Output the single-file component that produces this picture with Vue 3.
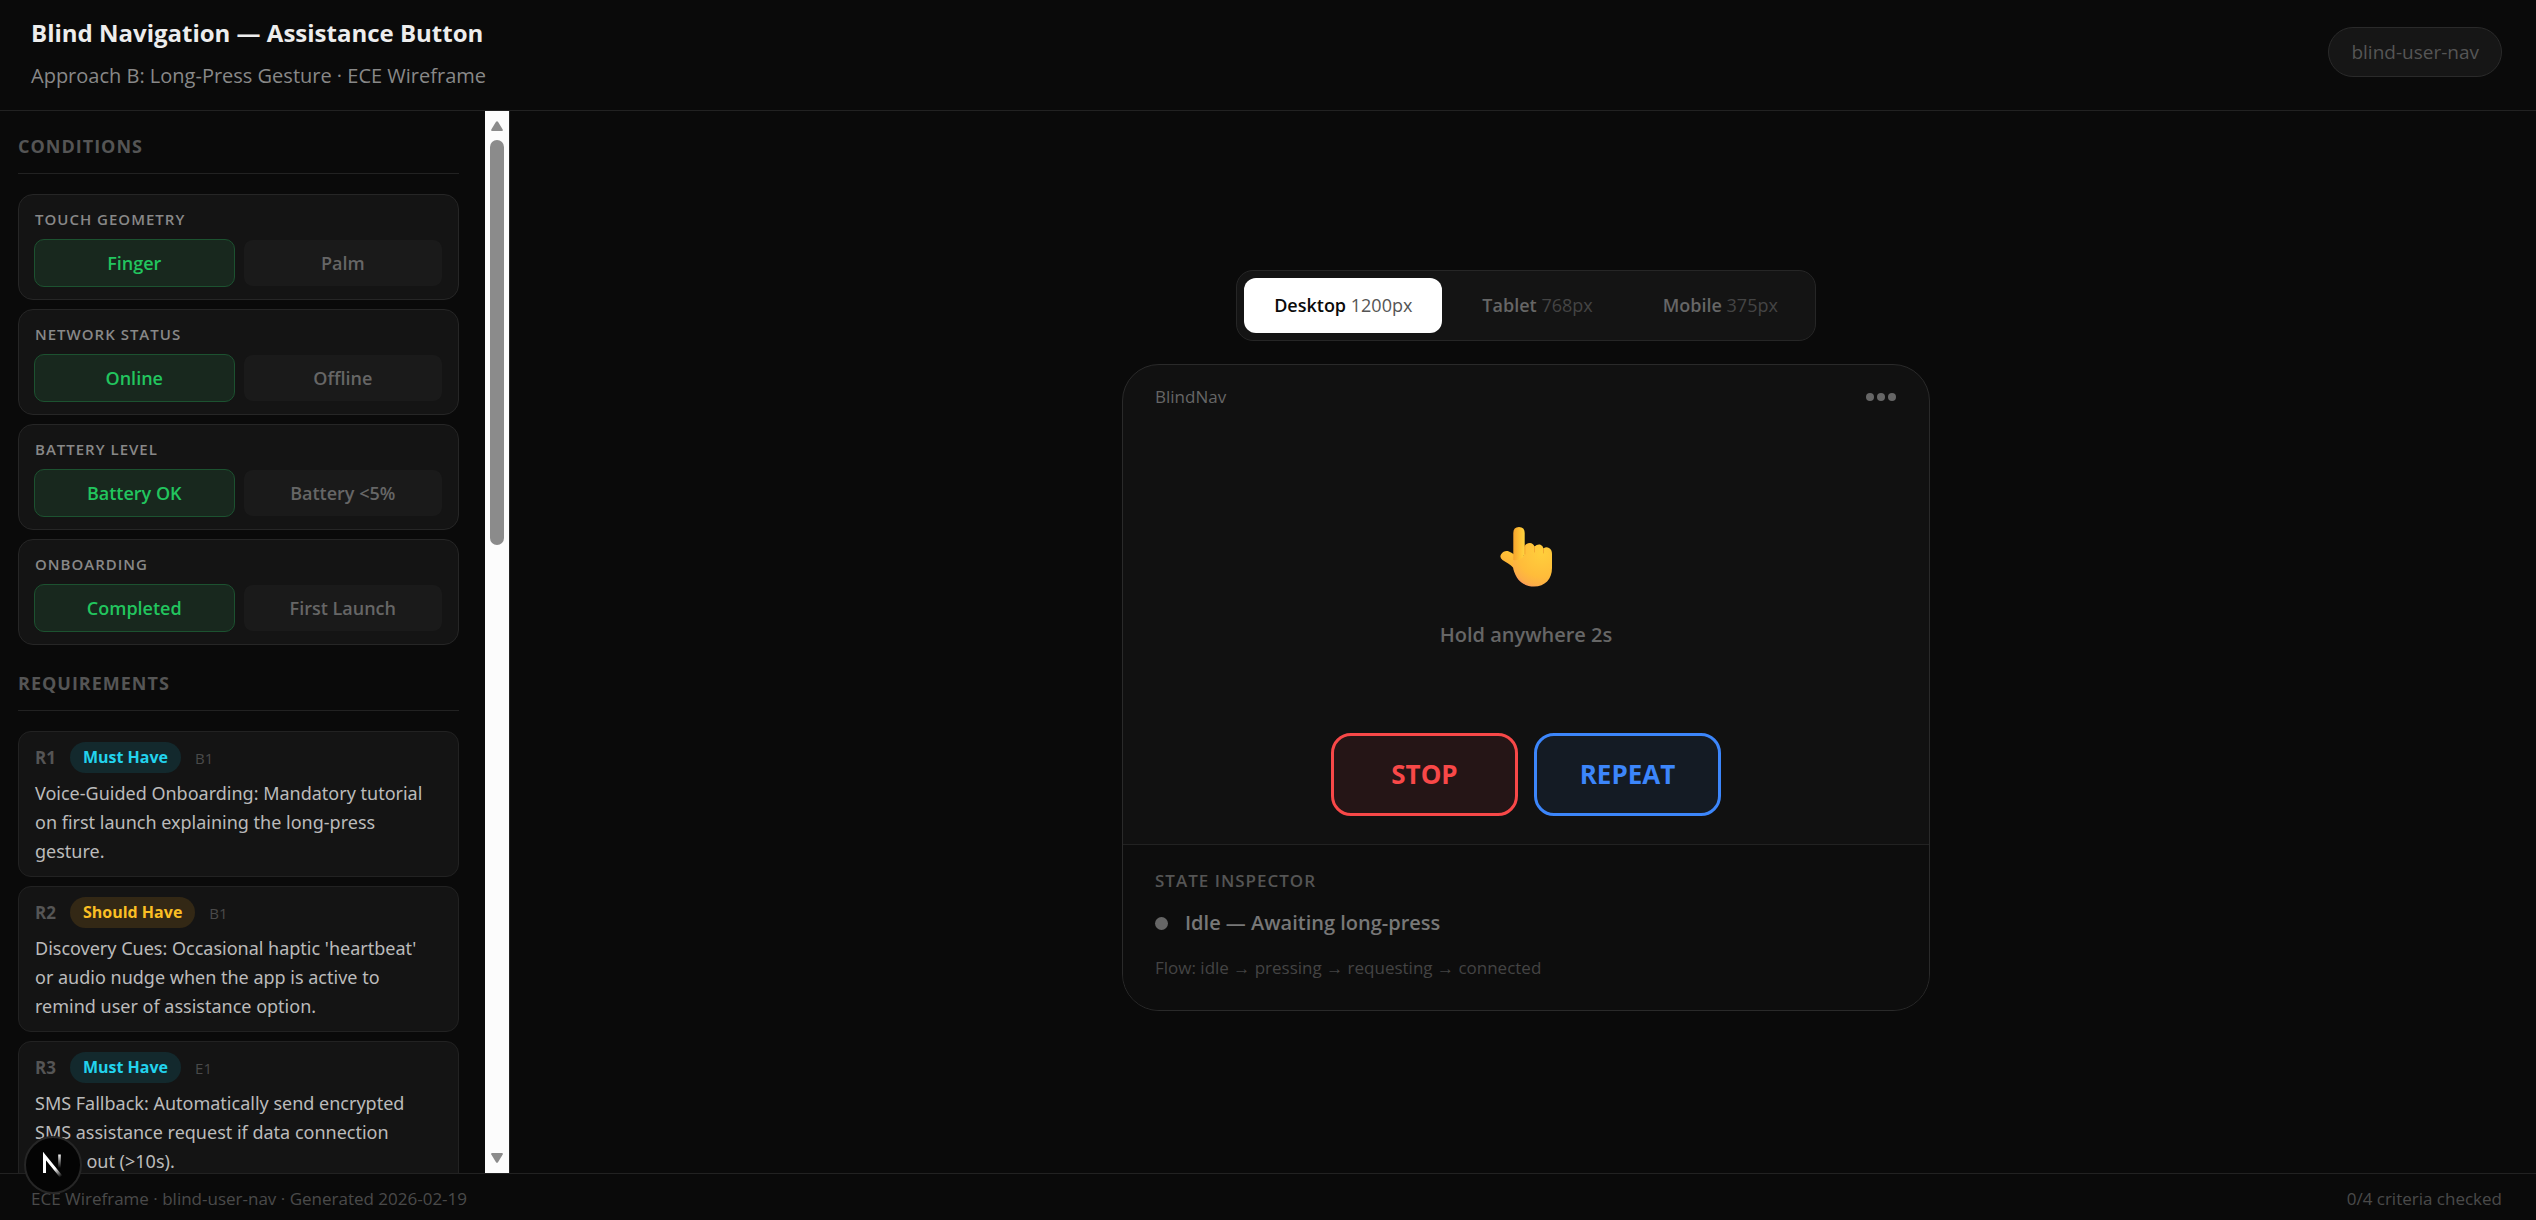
<script setup>
import { ref } from 'vue'

const conditions = ref([
  { label: 'Touch Geometry', options: ['Finger', 'Palm'], active: 0 },
  { label: 'Network Status', options: ['Online', 'Offline'], active: 0 },
  { label: 'Battery Level', options: ['Battery OK', 'Battery <5%'], active: 0 },
  { label: 'Onboarding', options: ['Completed', 'First Launch'], active: 0 },
])

const requirements = [
  {
    id: 'R1',
    priority: 'Must Have',
    kind: 'must',
    code: 'B1',
    text: 'Voice-Guided Onboarding: Mandatory tutorial on first launch explaining the long-press gesture.',
  },
  {
    id: 'R2',
    priority: 'Should Have',
    kind: 'should',
    code: 'B1',
    text: "Discovery Cues: Occasional haptic 'heartbeat' or audio nudge when the app is active to remind user of assistance option.",
  },
  {
    id: 'R3',
    priority: 'Must Have',
    kind: 'must',
    code: 'E1',
    text: 'SMS Fallback: Automatically send encrypted SMS assistance request if data connection times out (>10s).',
  },
]

const devices = [
  { name: 'Desktop', size: '1200px' },
  { name: 'Tablet', size: '768px' },
  { name: 'Mobile', size: '375px' },
]
const device = ref(0)
</script>

<template>
  <div class="app">
    <header class="top">
      <div>
        <h1>Blind Navigation — Assistance Button</h1>
        <p class="subtitle">Approach B: Long-Press Gesture · ECE Wireframe</p>
      </div>
      <span class="project">blind-user-nav</span>
    </header>

    <div class="body">
      <aside class="sidebar">
        <div class="panel">
          <h2>Conditions</h2>
          <section class="stack">
            <div v-for="c in conditions" :key="c.label" class="condition">
              <h3>{{ c.label }}</h3>
              <div class="options">
                <button
                  v-for="(o, i) in c.options"
                  :key="o"
                  type="button"
                  :class="{ on: c.active === i }"
                  @click="c.active = i"
                >{{ o }}</button>
              </div>
            </div>
          </section>

          <h2>Requirements</h2>
          <section class="stack">
            <article v-for="r in requirements" :key="r.id" class="requirement">
              <div class="meta">
                <span class="rid">{{ r.id }}</span>
                <span class="badge" :class="r.kind">{{ r.priority }}</span>
                <span class="code">{{ r.code }}</span>
              </div>
              <p>{{ r.text }}</p>
            </article>
          </section>
        </div>
        <div class="scrollbar" aria-hidden="true">
          <svg width="12" height="10" viewBox="0 0 12 10"><path d="M5 .8Q6-.4 7 .8L11.7 8.4Q12.2 10 11 10H1Q-.2 10 .3 8.4Z" fill="#8b8b8b" /></svg>
          <div class="track"><div class="thumb"></div></div>
          <svg width="12" height="10" viewBox="0 0 12 10"><path d="M5 9.2Q6 10.4 7 9.2L11.7 1.6Q12.2 0 11 0H1Q-.2 0 .3 1.6Z" fill="#8b8b8b" /></svg>
        </div>
      </aside>

      <main>
        <nav class="devices">
          <button
            v-for="(d, i) in devices"
            :key="d.name"
            type="button"
            :class="{ on: device === i }"
            @click="device = i"
          >{{ d.name }} <small>{{ d.size }}</small></button>
        </nav>

        <section class="frame">
          <div class="screen">
            <div class="bar">
              <span>BlindNav</span>
              <svg width="30" height="8" viewBox="0 0 30 8" fill="#666"><circle cx="4" cy="4" r="4" /><circle cx="15" cy="4" r="4" /><circle cx="26" cy="4" r="4" /></svg>
            </div>
            <div class="touch">
              <svg class="hand" width="52" height="60" viewBox="0 0 52 60" role="img" aria-label="Pointing hand">
                <defs>
                  <radialGradient id="palm" gradientUnits="userSpaceOnUse" cx="42" cy="26" r="40">
                    <stop offset="0" stop-color="#ffcf3c" />
                    <stop offset="0.6" stop-color="#ffbc3a" />
                    <stop offset="0.82" stop-color="#fdae46" />
                    <stop offset="1" stop-color="#f98472" />
                  </radialGradient>
                  <linearGradient id="finger" x1="0" y1="0" x2="1" y2="0">
                    <stop offset="0" stop-color="#f5a42e" />
                    <stop offset="0.6" stop-color="#ffc235" />
                    <stop offset="1" stop-color="#ffd541" />
                  </linearGradient>
                  <linearGradient id="thumb" x1="0.7" y1="0" x2="0.3" y2="1">
                    <stop offset="0" stop-color="#ffc636" />
                    <stop offset="0.7" stop-color="#fdb038" />
                    <stop offset="1" stop-color="#f59042" />
                  </linearGradient>
                </defs>
                <path d="M1.300 27C3.500 23.300 8 23.200 11 25.500L20 31V48L13.500 41C10.500 37 6 35.500 2.500 33Q-1 30.500 1.300 27Z" fill="url(#thumb)" />
                <path d="M13.300 29H24V20Q26 16 30 16Q33 16 34.500 19.500Q37 17 40 17.500Q43 18.500 43.500 21.500Q46 19.500 49 21Q52 22.500 52 27V41C52 52 45 59.500 34 59.500C24 59.500 16.500 54 13.300 42Z" fill="url(#palm)" />
                <path d="M13.300 6Q13.300 0 19 0Q24.700 0 24.700 6V27Q22 34 13.300 33Z" fill="url(#finger)" />
                <path d="M24.900 18V27M34.500 20V25M43.500 22V26" fill="none" stroke="#ed9a2b" stroke-width="1" stroke-linecap="round" opacity="0.7" />
              </svg>
              <p>Hold anywhere 2s</p>
            </div>
            <div class="actions">
              <button type="button" class="stop">STOP</button>
              <button type="button" class="repeat">REPEAT</button>
            </div>
          </div>
          <div class="inspector">
            <h3>State Inspector</h3>
            <div class="state"><i></i><span>Idle — Awaiting long-press</span></div>
            <p>Flow: idle → pressing → requesting → connected</p>
          </div>
        </section>
      </main>
    </div>

    <footer>
      <span>ECE Wireframe · blind-user-nav · Generated 2026-02-19</span>
      <span>0/4 criteria checked</span>
    </footer>

    <button class="devtools" type="button" aria-label="Open developer tools">
      <svg width="24" height="26" viewBox="0 0 24 26" fill="none">
        <defs>
          <linearGradient id="diag" gradientUnits="userSpaceOnUse" x1="15" y1="16" x2="21" y2="24">
            <stop offset="0" stop-color="#fff" />
            <stop offset="1" stop-color="#fff" stop-opacity="0" />
          </linearGradient>
          <linearGradient id="stem" gradientUnits="userSpaceOnUse" x1="0" y1="2" x2="0" y2="16">
            <stop offset="0" stop-color="#fff" />
            <stop offset="1" stop-color="#fff" stop-opacity="0" />
          </linearGradient>
        </defs>
        <path d="M3.500 21V4L20.500 25" stroke="url(#diag)" stroke-width="3" />
        <path d="M18.500 2.500V16" stroke="url(#stem)" stroke-width="2.600" />
      </svg>
    </button>
  </div>
</template>

<style>
body {
  margin: 0;
  background: #0a0a0a;
}
</style>

<style scoped>
.app {
  position: relative;
  display: flex;
  flex-direction: column;
  height: 100vh;
  overflow: hidden;
  background: #0a0a0a;
  color: #ededed;
  font-family: "Open Sans", "Noto Sans", sans-serif;
  font-size: 17px;
}
* {
  box-sizing: border-box;
}
h1, h2, h3, p {
  margin: 0;
}
button {
  font-family: inherit;
  cursor: pointer;
}
.top {
  display: flex;
  justify-content: space-between;
  align-items: flex-start;
  flex: none;
  padding: 16px 34px 18px 31px;
  border-bottom: 1px solid #222;
}
h1 {
  font-size: 24px;
  line-height: 34px;
  font-weight: 700;
}
.subtitle {
  margin-top: 10px;
  font-size: 20px;
  line-height: 32px;
  color: #888;
}
.project {
  margin-top: 11px;
  padding: 0 22px;
  border: 1px solid #2a2a2a;
  border-radius: 25px;
  background: #161616;
  font-size: 19px;
  line-height: 48px;
  color: #555;
}
.body {
  display: flex;
  flex: 1;
  min-height: 0;
}
.sidebar {
  display: flex;
  flex: none;
  width: 510px;
  border-right: 1px solid #222;
}
.panel {
  flex: 1;
  overflow: hidden;
  padding: 22px 26px 0 18px;
}
h2 {
  margin-bottom: 20px;
  padding-bottom: 14px;
  border-bottom: 1px solid #222;
  font-size: 18px;
  line-height: 26px;
  font-weight: 700;
  letter-spacing: 1px;
  text-transform: uppercase;
  color: #555;
}
.stack {
  display: flex;
  flex-direction: column;
  gap: 9px;
}
.stack + h2 {
  margin-top: 25px;
}
.condition {
  padding: 12px 15px;
  border: 1px solid #262626;
  border-radius: 15px;
  background: #141414;
}
.condition h3 {
  margin-bottom: 8px;
  padding-left: 1px;
  font-size: 15px;
  line-height: 24px;
  font-weight: 600;
  letter-spacing: 1px;
  text-transform: uppercase;
  color: #888;
}
.options {
  display: grid;
  grid-template-columns: 1fr 1fr;
  gap: 8px;
}
.options button {
  padding: 0;
  border: 1px solid #141414;
  border-radius: 10px;
  background: #1a1a1a;
  font-size: 18px;
  line-height: 46px;
  font-weight: 600;
  color: #666;
}
.options .on {
  border-color: #1c5230;
  background: #18281e;
  color: #22c55e;
}
.requirement {
  padding: 10px 16px;
  border: 1px solid #222;
  border-radius: 13px;
  background: #141414;
}
.meta {
  display: flex;
  align-items: center;
  gap: 14px;
  margin-bottom: 6px;
}
.rid {
  font-weight: 700;
  color: #555;
}
.badge {
  padding: 0 13px;
  border-radius: 16px;
  font-size: 16px;
  line-height: 31px;
  font-weight: 700;
}
.must {
  background: #13292d;
  color: #22d3ee;
}
.should {
  background: #332815;
  color: #fbbf24;
}
.code {
  font-size: 15px;
  color: #4a4a4a;
}
.requirement p {
  padding-right: 8px;
  font-family: "Noto Sans", "Open Sans", sans-serif;
  font-size: 18px;
  line-height: 29px;
  color: #bbb;
}
.scrollbar {
  display: flex;
  flex-direction: column;
  align-items: center;
  width: 24px;
  padding: 10px 0;
  background: #fcfcfc;
}
.scrollbar svg {
  display: block;
  flex: none;
}
.track {
  flex: 1;
  width: 14px;
  margin: 9px 0;
}
.thumb {
  height: 405px;
  border-radius: 7px;
  background: #8b8b8b;
}
main {
  display: flex;
  flex: 1;
  flex-direction: column;
  align-items: center;
  justify-content: center;
  gap: 23px;
  padding: 0 0 3px 6px;
}
.devices {
  display: flex;
  gap: 10px;
  padding: 7px;
  border: 1px solid #262626;
  border-radius: 17px;
  background: #141414;
}
.devices button {
  padding: 0 30px;
  border: 0;
  border-radius: 12px;
  background: none;
  font-size: 18px;
  line-height: 55px;
  font-weight: 600;
  color: #666;
}
.devices small {
  font-size: 18px;
  font-weight: 400;
  color: #444;
}
.devices .on {
  background: #fff;
  color: #0a0a0a;
}
.devices .on small {
  color: #555;
}
.frame {
  width: 40%;
  overflow: hidden;
  border: 1px solid #2a2a2a;
  border-radius: 37px;
  background: #111;
}
.bar {
  display: flex;
  align-items: center;
  justify-content: space-between;
  padding: 18px 33px 0 32px;
  line-height: 28px;
  color: #666;
}
.touch {
  display: flex;
  flex-direction: column;
  align-items: center;
  gap: 32px;
  padding: 116px 0 82px;
}
.hand {
  display: block;
}
.touch p {
  font-size: 20px;
  line-height: 32px;
  font-weight: 600;
  color: #666;
}
.actions {
  display: flex;
  justify-content: center;
  gap: 16px;
  padding-bottom: 28px;
}
.actions button {
  width: 187px;
  padding: 0;
  border: 3px solid;
  border-radius: 20px;
  font-size: 26px;
  line-height: 77px;
  font-weight: 700;
}
.stop {
  background: #251516;
  color: #f84848;
}
.repeat {
  background: #141b24;
  color: #3c86fb;
}
.inspector {
  padding: 22px 32px 24px;
  border-top: 1px solid #222;
  background: #0d0d0d;
}
.inspector h3 {
  font-size: 17px;
  line-height: 28px;
  font-weight: 600;
  letter-spacing: 1px;
  text-transform: uppercase;
  color: #555;
}
.state {
  display: flex;
  align-items: center;
  gap: 17px;
  margin: 12px 0 11px;
  font-size: 20px;
  line-height: 32px;
  font-weight: 600;
  color: #777;
}
.state i {
  width: 13px;
  height: 13px;
  border-radius: 50%;
  background: #666;
}
.inspector p {
  line-height: 36px;
  color: #444;
}
footer {
  display: flex;
  justify-content: space-between;
  flex: none;
  padding: 10px 34px 6px 31px;
  border-top: 1px solid #222;
  line-height: 30px;
  color: #4a4a4a;
}
.devtools {
  position: absolute;
  left: 24px;
  bottom: 26px;
  display: grid;
  place-items: center;
  width: 58px;
  height: 58px;
  padding: 0;
  border: 2px solid #262626;
  border-radius: 50%;
  background: #040404;
}
</style>
